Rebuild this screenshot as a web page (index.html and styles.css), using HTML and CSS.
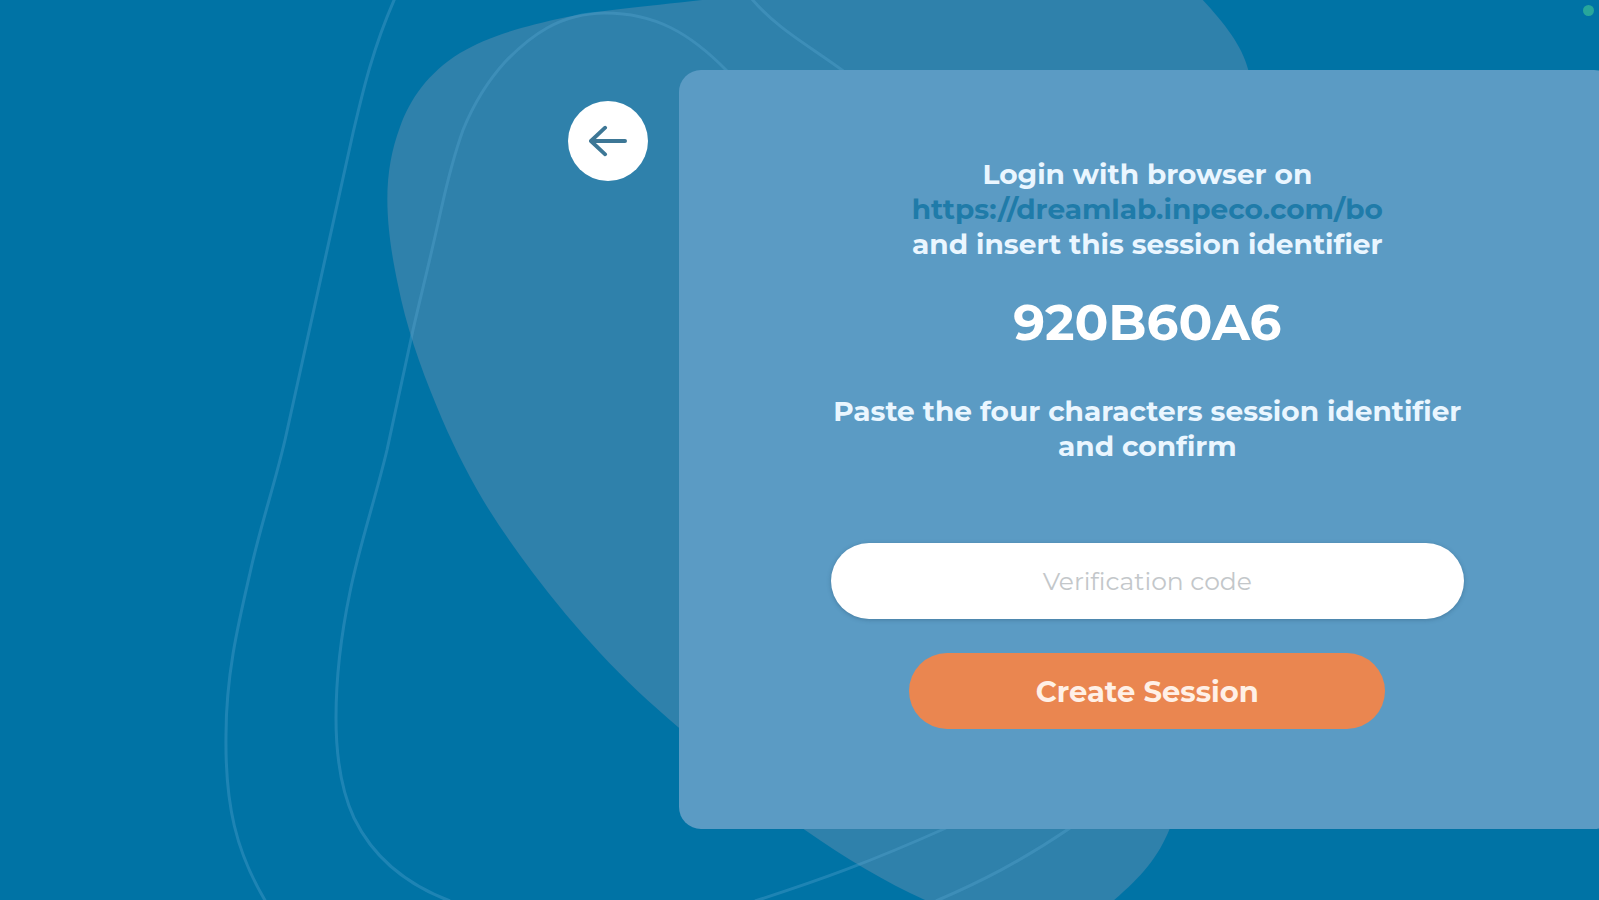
FILE: index.html
```html
<!DOCTYPE html>
<html lang="en">
<head>
<meta charset="utf-8">
<meta name="viewport" content="width=device-width, initial-scale=1">
<title>Create Session</title>
<link rel="stylesheet" href="styles.css">
</head>
<body>
<svg class="backdrop" viewBox="0 0 1599 900" preserveAspectRatio="xMidYMid slice" aria-hidden="true">
  <path class="backdrop-blob" d="M800 -12C690 3 610 8 567 17C520 27 487 37 460 53C428 73 410 99 400 127C384 170 383 215 398 285C406 325 419 364 437 407C450 439 466 471 483 500C498 525 515 549 533 573C554 601 577 628 600 653C625 680 650 703 678 727C720 764 763 800 805 830C845 858 885 882 925 900C975 930 1060 950 1113 901C1141 877 1158 858 1170 828C1220 700 1290 250 1248 69C1242 45 1222 20 1199 -4C1100 -60 900 -30 800 -12Z"/>
  <path class="backdrop-line" d="M395 -2C372 50 362 95 353 133L285 440C274 487 260 527 250 573C238 625 226 675 226 735C225 805 236 852 266 902"/>
  <path class="backdrop-line" d="M751 -2C778 30 810 46 846 73"/>
  <path class="backdrop-line" d="M727 71C690 33 655 13 605 13C560 13 530 36 505 62C485 84 472 108 463 130C453 158 447 183 441 210C430 260 421 295 413 330L387 450C375 500 359 547 350 592C341 635 336 675 336 718C336 755 341 790 354 818C373 857 405 884 450 901"/>
  <path class="backdrop-line" d="M755 901C820 880 870 862 946 828"/>
  <path class="backdrop-line" d="M936 901C980 882 1020 862 1070 828"/>
</svg>
<span class="status-dot"></span>
<main class="page">
  <button class="back" type="button" aria-label="Back">
    <svg class="back-icon" viewBox="0 0 40 40" aria-hidden="true"><path d="M38 20H2M17 6L2 20L17 34"/></svg>
  </button>
  <form class="card">
    <p class="text">Login with browser on<br><a class="link" href="https://dreamlab.inpeco.com/bo">https://dreamlab.inpeco.com/bo</a><br>and insert this session identifier</p>
    <strong class="code">920B60A6</strong>
    <label class="text" for="verification">Paste the four characters session identifier and confirm</label>
    <input class="field" id="verification" type="text" placeholder="Verification code">
    <button class="submit" type="submit">Create Session</button>
  </form>
</main>
</body>
</html>
```
FILE: styles.css
```css
* {
  box-sizing: border-box;
}

body {
  margin: 0;
  min-height: 100vh;
  overflow: hidden;
  background: #0073a5;
  color: #eaf6ff;
  font-family: Montserrat, Inter, sans-serif;
}

.backdrop {
  position: absolute;
  inset: 0;
  width: 100%;
  height: 100%;
}

.backdrop-blob {
  fill: #2f81ab;
}

.backdrop-line {
  fill: none;
  stroke: #58a8d4;
  stroke-opacity: 0.34;
  stroke-width: 3;
}

.status-dot {
  position: absolute;
  top: 5px;
  right: 5px;
  width: 11px;
  height: 11px;
  border-radius: 50%;
  background: #27a79b;
}

.page {
  position: relative;
  display: flex;
  align-items: flex-start;
  gap: 31px;
  margin-right: -17px;
  padding-top: 70px;
  padding-left: 35.5%;
}

.back {
  display: grid;
  place-items: center;
  flex: none;
  width: 80px;
  height: 80px;
  margin-top: 31px;
  padding: 0;
  border: 0;
  border-radius: 50%;
  background: #fff;
}

.back-icon {
  width: 38px;
  height: 38px;
  fill: none;
  stroke: #3d7796;
  stroke-width: 4;
  stroke-linecap: round;
  stroke-linejoin: round;
}

.card {
  display: flex;
  flex: 1;
  flex-direction: column;
  align-items: center;
  padding: 87px 20px 100px;
  border-radius: 22px;
  background: #5b9bc4;
  text-align: center;
}

.text {
  max-width: 640px;
  margin: 0;
  font-size: 28px;
  font-weight: 700;
  line-height: 35px;
}

.link {
  color: #1f7ba9;
  text-decoration: none;
}

.code {
  margin: 31px 0 41px;
  color: #fff;
  font-size: 50px;
  font-weight: 700;
  line-height: 60px;
}

.field,
.submit {
  height: 76px;
  border: 0;
  border-radius: 38px;
  font-family: inherit;
  text-align: center;
}

.field {
  width: 100%;
  max-width: 633px;
  margin: 79px 0 34px;
  background: #fff;
  box-shadow: 0 1px 4px rgb(40 80 110 / 40%);
  color: #3d7796;
  font-size: 25px;
}

.field::placeholder {
  color: #c3c7ca;
  opacity: 1;
}

.submit {
  width: 100%;
  max-width: 476px;
  background: #ea8650;
  color: #fff0e6;
  font-size: 29px;
  font-weight: 700;
}
```
